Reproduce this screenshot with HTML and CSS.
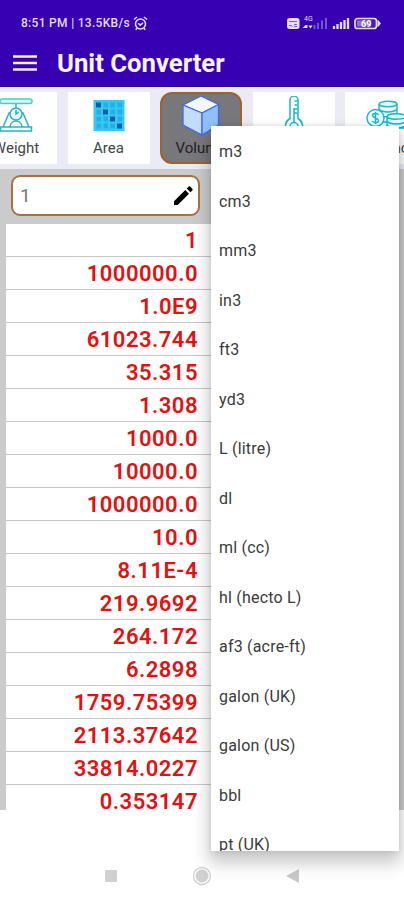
FILE: index.html
```html
<!DOCTYPE html>
<html lang="en">
<head>
    <meta charset="UTF-8">
    <meta name="viewport" content="width=device-width, initial-scale=1.0">
    <title>Unit Converter</title>
    <link rel="stylesheet" href="styles.css">
</head>
<body>
    <header class="header">
        <div class="status-bar">
            <span class="status-text">8:51 PM | 13.5KB/s</span>
            <svg class="alarm" width="15" height="15" viewBox="0 0 15 15" fill="none" stroke="#e4dcfa" stroke-width="1.6">
                <circle cx="7.5" cy="8" r="5"/>
                <path d="M1 3.5 4 1M14 3.5 11 1M5.2 7.2l2 2L10 6.8M4 12.2l-1.3 1.5M11 12.2l1.3 1.5"/>
            </svg>
            <svg class="signals" width="98" height="16" viewBox="0 0 98 16">
                <rect x="1" y="3" width="12.500" height="11" rx="2.500" fill="#e4dcfa"/>
                <path d="M3 6.500h8M3 10.500h2.500l1 1.500M8 9.500h3M8 11.500h3" stroke="#7c5bc8" fill="none"/>
                <text x="18" y="6" class="net-label">4G</text>
                <path d="M16.500 13l3-3h2v3zM22.500 10.500h4l-2 3z" fill="#e4dcfa"/>
                <path d="M28.500 14v-4M32 14V8M36 14V5.500M40 14V3" stroke="#7d5cd0" stroke-width="1.800"/>
                <path d="M48 14v-3M51.500 14V9M55 14V7M58.500 14V5M62 14V3" stroke="#e4dcfa" stroke-width="2.300"/>
                <rect x="69" y="3.500" width="21.500" height="10" rx="2.500" fill="#4a1cbd" stroke="#e4dcfa" stroke-width="1.700"/>
                <path d="M92 5.500l2.500 3-2.500 3z" fill="#e4dcfa" stroke="#e4dcfa"/>
                <rect x="71" y="5.500" width="14" height="6" fill="#8f70d6"/>
                <text x="75" y="12" class="battery-label">69</text>
            </svg>
        </div>
        <div class="app-bar">
            <svg width="24" height="18" viewBox="0 0 24 18" stroke="#f3effc" stroke-width="2.400">
                <path d="M0 2.500h24M0 9h24M0 15.500h24"/>
            </svg>
            <h1>Unit Converter</h1>
        </div>
    </header>

    <nav class="tabs">
        <div class="tab">
            <svg width="38" height="38" viewBox="0 0 38 38" fill="none" stroke="#20b5c4" stroke-width="1.500">
                <rect x="3" y="3" width="32" height="4.500" rx="2" fill="#d8faf4" stroke="#3fd2c0"/>
                <path d="M19 8v4M12.500 16 6 31M25.500 16 32 31M13 31c0-4 3-6 6-6s6 2 6 6M3.500 31h31v4h-31z"/>
                <circle cx="19" cy="18" r="6" fill="#eafcfd"/>
                <path d="M19 14v4l3-2"/>
            </svg>
            <span>Weight</span>
        </div>
        <div class="tab">
            <svg width="38" height="38" viewBox="0 0 38 38">
                <rect x="3.500" y="4" width="31" height="31" fill="#33c9f3"/>
                <g fill="#27aee4">
                    <path d="M13.500 6.500h4.500v5h-4.500zM20.500 6.500h4.500v5h-4.500zM27.500 6.500h4.500v5h-4.500z"/>
                    <path d="M6.500 13.500h4.500v5h-4.500zM20.500 13.500h4.500v5h-4.500zM27.500 13.500h4.500v5h-4.500z"/>
                    <path d="M6.500 20.500h4.500v5h-4.500zM13.500 20.500h4.500v5h-4.500zM27.500 20.500h4.500v5h-4.500z"/>
                    <path d="M6.500 27.500h4.500v5h-4.500zM13.500 27.500h4.500v5h-4.500zM20.500 27.500h4.500v5h-4.500z"/>
                </g>
                <path d="M6 6.500h5v5h-5zM13 13.500h5v5h-5zM20 20.500h5v5h-5zM27 27.500h5v5h-5z" fill="#105ba8"/>
            </svg>
            <span>Area</span>
        </div>
        <div class="tab active">
            <svg width="38" height="44" viewBox="0 0 38 44" stroke="#4068e8" stroke-width="1.300" stroke-linejoin="round">
                <path d="M19 2 36.500 10.500 20 19 1 11z" fill="#f4f8ff"/>
                <path d="M1 11l19 8v22L1 31z" fill="#c3dcfe"/>
                <path d="M20 19l16.500-8.500V31L20 41z" fill="#8fc0fc"/>
            </svg>
            <span>Volume</span>
        </div>
        <div class="tab">
            <svg width="38" height="38" viewBox="0 0 38 38" fill="none" stroke="#18b8c8" stroke-width="1.500">
                <path d="M15 22.500V4a4 4 0 0 1 8 0v18.500a8.500 8.500 0 1 1-8 0z"/>
                <circle cx="19" cy="30.500" r="4"/>
                <path d="M19 26V12M19.500 5h3M19.500 9h3M19.500 13h3M19.500 17h3"/>
            </svg>
            <span>Temp</span>
        </div>
        <div class="tab">
            <svg width="42" height="38" viewBox="0 0 42 38" fill="none" stroke="#20b5c4" stroke-width="1.400">
                <g fill="#e8fbfd">
                    <path d="M14 8v18h18V8"/>
                    <ellipse cx="23" cy="8" rx="9" ry="2.700"/>
                    <path d="M14 13c3 4 15 4 18 0M14 18c3 4 15 4 18 0"/>
                    <path d="M22 21v11h19V21"/>
                    <ellipse cx="31.500" cy="20.500" rx="9.500" ry="2.700"/>
                    <path d="M22 25c3 4 16 4 19 0M22 29c3 4 16 4 19 0"/>
                    <circle cx="10.500" cy="22" r="8.500"/>
                </g>
                <path d="M13.500 19c-1-2-6-2-6 .5s6 2.500 6 5-5 2.500-6 .5M10.500 16v12"/>
            </svg>
            <span>Currency</span>
        </div>
    </nav>

    <main class="content">
        <div class="input-box">
            <span>1</span>
            <svg width="20" height="20" viewBox="0 0 20 20">
                <path d="M1 15.300 12.300 4l3.700 3.700L4.700 19H1zM13.700 2.600 15.600.8c.6-.6 1.200-.6 1.700 0l2 2c.5.5.5 1.100 0 1.700L17.400 6.300z"/>
            </svg>
        </div>
        <ul class="results">
            <li>1</li>
            <li>1000000.0</li>
            <li>1.0E9</li>
            <li>61023.744</li>
            <li>35.315</li>
            <li>1.308</li>
            <li>1000.0</li>
            <li>10000.0</li>
            <li>1000000.0</li>
            <li>10.0</li>
            <li>8.11E-4</li>
            <li>219.9692</li>
            <li>264.172</li>
            <li>6.2898</li>
            <li>1759.75399</li>
            <li>2113.37642</li>
            <li>33814.0227</li>
            <li>0.353147</li>
        </ul>
    </main>

    <footer class="nav-bar">
        <svg width="14" height="14"><rect x="1" y="1" width="12" height="12" rx="1" fill="#d0d0d0"/></svg>
        <svg width="20" height="20"><circle cx="10" cy="10" r="8.500" fill="none" stroke="#d0d0d0" stroke-width="1.300"/><circle cx="10" cy="10" r="6.500" fill="#d0d0d0"/></svg>
        <svg width="14" height="14"><path d="M0 7 13 0v14z" fill="#c9c9c9"/></svg>
    </footer>

    <!-- unit picker -->
    <ul class="dropdown">
        <li>m3</li>
        <li>cm3</li>
        <li>mm3</li>
        <li>in3</li>
        <li>ft3</li>
        <li>yd3</li>
        <li>L (litre)</li>
        <li>dl</li>
        <li>ml (cc)</li>
        <li>hl (hecto L)</li>
        <li>af3 (acre-ft)</li>
        <li>galon (UK)</li>
        <li>galon (US)</li>
        <li>bbl</li>
        <li>pt (UK)</li>
    </ul>
</body>
</html>
```
FILE: styles.css
```css
* {
    box-sizing: border-box;
}
body {
    margin: 0;
    height: 900px;
    position: relative;
    overflow: hidden;
    background: #fff;
    font-family: Roboto, "Liberation Sans", sans-serif;
}
ul {
    list-style: none;
    margin: 0;
    padding: 0;
}
.header {
    height: 87px;
    background: #3700b3;
    border-bottom: 1px solid #2a0898;
}
.status-bar {
    display: flex;
    align-items: center;
    height: 46px;
    padding: 0 20px 0 21px;
}
.status-text {
    color: #e4dcfa;
    font-size: 12px;
    font-weight: 500;
    letter-spacing: 0.3px;
}
.alarm {
    margin-left: 3px;
}
.signals {
    margin-left: auto;
}
.net-label {
    fill: #e4dcfa;
    font-size: 7px;
}
.battery-label {
    fill: #fff;
    font-size: 9px;
    font-weight: 700;
}
.app-bar {
    display: flex;
    align-items: center;
    gap: 20px;
    height: 33px;
    padding-left: 13px;
}
h1 {
    margin: 0;
    color: #f6f3fd;
    font-size: 25.7px;
    font-weight: 700;
}
.tabs {
    display: flex;
    gap: 10.5px;
    height: 82px;
    padding: 5px 0 0;
    margin-left: -25px;
    overflow: hidden;
    background: #ebebf3;
}
.tab {
    display: flex;
    flex-direction: column;
    align-items: center;
    flex: 0 0 82px;
    height: 72px;
    padding-top: 4px;
    background: #fff;
    color: #444;
    font-size: 15px;
}
.tab svg {
    flex: none;
}
.tab span {
    margin-top: 5px;
}
.tab.active {
    padding-top: 0;
    background: #77777c;
    border: 2px solid #a0632a;
    border-radius: 12px;
    color: #222;
}
.tab.active span {
    margin-top: 1px;
}
.content {
    height: 641px;
    padding: 6px 0 0 6px;
    background: #cbcbcb;
}
.input-box {
    display: flex;
    align-items: center;
    justify-content: space-between;
    width: 189px;
    height: 41px;
    margin-left: 5px;
    padding: 0 5px 0 7px;
    background: #fff;
    border: 2px solid #a87240;
    border-radius: 9px;
    color: #777;
    font-size: 19px;
}
.results {
    width: 205px;
    margin-top: 7.5px;
    background: #fff;
}
.results li {
    height: 33px;
    padding-right: 13px;
    border-bottom: 1.5px solid #c6c6c6;
    color: #e01212;
    font-size: 22px;
    font-weight: 600;
    letter-spacing: 0.5px;
    line-height: 34px;
    text-align: right;
}
.results li:last-child {
    border-bottom: none;
}
.nav-bar {
    display: flex;
    align-items: center;
    height: 90px;
    padding: 42px 0 0 104px;
    gap: 74px;
}
.dropdown {
    position: absolute;
    left: 211px;
    top: 126px;
    width: 188px;
    height: 725px;
    overflow: hidden;
    padding-top: 1px;
    background: #fff;
    box-shadow: 0 10px 16px 2px rgba(0, 0, 0, 0.22), 0 0 5px rgba(0, 0, 0, 0.12);
}
.dropdown li {
    height: 49.5px;
    padding-left: 8px;
    color: #3a3a3a;
    font-size: 16px;
    letter-spacing: 0.2px;
    line-height: 50px;
}
```
